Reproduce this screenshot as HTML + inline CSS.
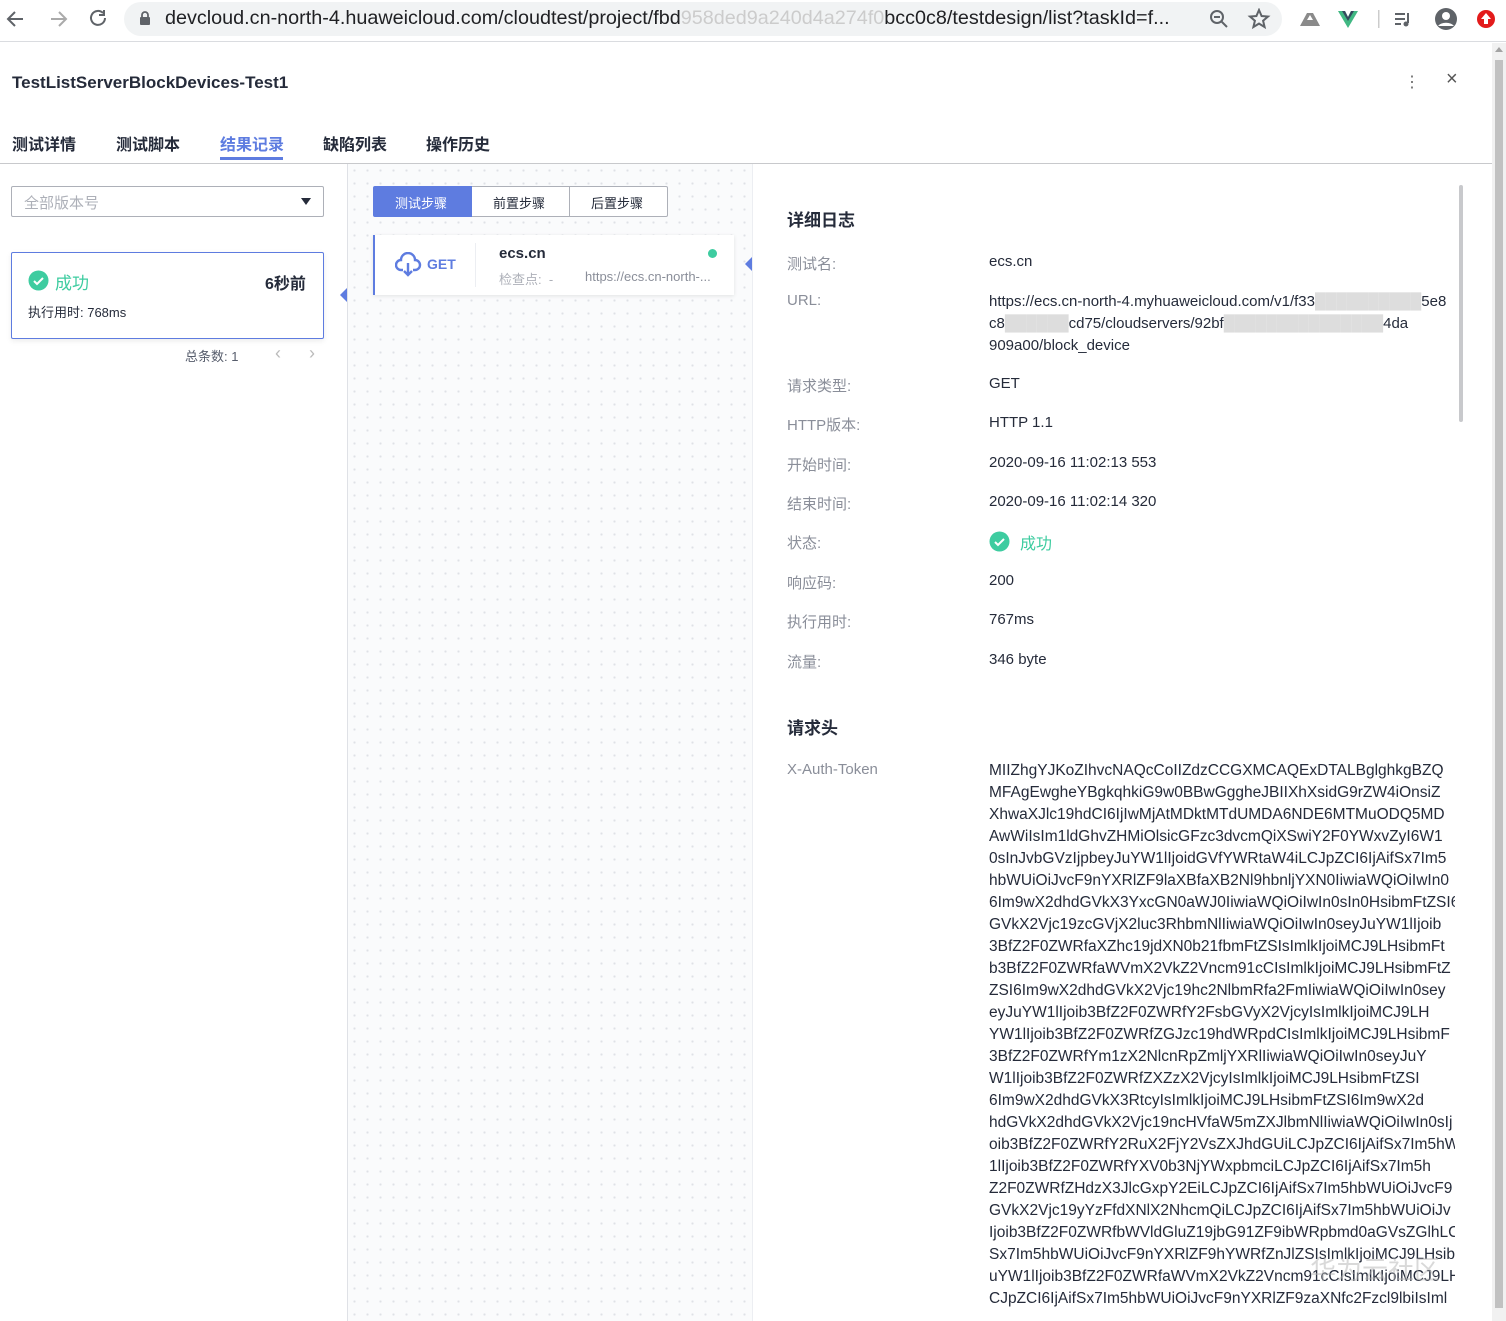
<!DOCTYPE html>
<html><head><meta charset="utf-8">
<style>
*{margin:0;padding:0;box-sizing:border-box}
html,body{width:1506px;height:1321px;overflow:hidden}
body{background:#fff;font-family:"Liberation Sans","Noto Sans CJK SC",sans-serif;position:relative;color:#252b3a}
.a{position:absolute;white-space:nowrap}
.lbl{position:absolute;left:787px;font-size:15px;color:#8a8e99}
.val{position:absolute;left:989px;font-size:15px;color:#252b3a}
.tok{position:absolute;left:989px;top:760px;width:466px;overflow:hidden;font-size:15.5px;line-height:22px;color:#252b3a;white-space:pre}
</style></head><body>
<div class="a" style="left:0;top:0;width:1506px;height:42px;background:#fff;border-bottom:1px solid #dadce0"></div>
<svg class="a" style="left:5px;top:8px" width="120" height="22" viewBox="0 0 120 22" fill="none" stroke="#5f6368" stroke-width="2">
<path d="M18 11H4M10 4l-7 7 7 7"/>
<path d="M46 11h14M54 4l7 7-7 7" stroke="#aaa"/>
<path d="M98 5a7 7 0 1 0 2 5M99 2v5h-5"/>
</svg>
<div class="a" style="left:124px;top:2px;width:1158px;height:34px;background:#f1f3f4;border-radius:17px"></div>
<svg class="a" style="left:139px;top:11px" width="12" height="15" viewBox="0 0 12 15"><rect x="1" y="6" width="10" height="8" rx="1" fill="#5f6368"/><path d="M3 6V4a3 3 0 0 1 6 0v2" stroke="#5f6368" stroke-width="1.8" fill="none"/></svg>
<div class="a" style="left:165px;top:7px;font-size:19.8px;color:#202124">devcloud.cn-north-4.huaweicloud.com/cloudtest/project/fbd<span style="color:#ccc">958ded9a240d4a274f0</span>bcc0c8/testdesign/list?taskId=f...</div>
<svg class="a" style="left:1208px;top:8px" width="64" height="22" viewBox="0 0 64 22" fill="none" stroke="#5f6368" stroke-width="2"><circle cx="9" cy="9" r="6"/><path d="M13 13l6 6M6 9h6"/><path d="M51 2l2.6 6 6.4.5-4.9 4.2 1.5 6.3L51 15.6 45.4 19l1.5-6.3L42 8.5l6.4-.5z"/></svg>
<svg class="a" style="left:1298px;top:7px" width="200" height="24" viewBox="0 0 200 24">
<path d="M2 19l7-13h6l7 13z" fill="#8a8a8a"/><path d="M9 13l3-5 3 5z" fill="#fff"/>
<path d="M40 4h7l3 6 3-6h7l-10 17z" fill="#41b883"/><path d="M44 4h3l3 6 3-6h3l-6 10z" fill="#35495e"/>
<rect x="80" y="3" width="1.5" height="18" fill="#ccc"/>
<path d="M97 7h10M97 12h10M97 17h6M110 6v10" stroke="#5f6368" stroke-width="2"/><circle cx="108" cy="17" r="2.5" fill="#5f6368"/>
<circle cx="148" cy="12" r="11" fill="#5f6368"/><circle cx="148" cy="9" r="4" fill="#fff"/><path d="M140 19a9 6 0 0 1 16 0" fill="#fff"/>
<circle cx="188" cy="12" r="9" fill="#e31b1b"/><path d="M188 6l-5 6h3v5h4v-5h3z" fill="#fff"/>
</svg>
<div class="a" style="left:1492px;top:43px;width:14px;height:1278px;background:#f1f1f1"></div>
<div class="a" style="left:1495px;top:60px;width:8px;height:1248px;background:#c1c1c1"></div>
<div class="a" style="left:1495px;top:47px;width:0;height:0;border-left:4px solid transparent;border-right:4px solid transparent;border-bottom:5px solid #a3a3a3"></div>
<div class="a" style="left:12px;top:73px;font-size:17px;font-weight:bold;color:#252b3a">TestListServerBlockDevices-Test1</div>
<div class="a" style="left:1404px;top:72px;font-size:16px;color:#666">&#8942;</div>
<div class="a" style="left:1446px;top:68px;font-size:20px;color:#555">×</div>
<div class="a" style="left:12px;top:131px;font-size:16px;color:#252b3a;font-weight:bold">测试详情</div>
<div class="a" style="left:116px;top:131px;font-size:16px;color:#252b3a;font-weight:bold">测试脚本</div>
<div class="a" style="left:220px;top:131px;font-size:16px;color:#5e7ce0;font-weight:bold">结果记录</div>
<div class="a" style="left:220px;top:157px;width:63px;height:3px;background:#5e7ce0"></div>
<div class="a" style="left:323px;top:131px;font-size:16px;color:#252b3a;font-weight:bold">缺陷列表</div>
<div class="a" style="left:426px;top:131px;font-size:16px;color:#252b3a;font-weight:bold">操作历史</div>
<div class="a" style="left:0;top:163px;width:1492px;height:1px;background:#c8c9cc"></div>
<div class="a" style="left:347px;top:164px;width:1px;height:1157px;background:#dfe1e6"></div>
<div class="a" style="left:11px;top:186px;width:313px;height:31px;border:1px solid #adb0b8;border-radius:2px"></div>
<div class="a" style="left:24px;top:192px;font-size:15px;color:#adb0b8">全部版本号</div>
<div class="a" style="left:301px;top:198px;border-left:5px solid transparent;border-right:5px solid transparent;border-top:7px solid #252b3a"></div>
<div class="a" style="left:11px;top:252px;width:313px;height:87px;border:1px solid #5e7ce0;border-radius:2px;box-shadow:0 2px 6px rgba(0,0,0,.08)"></div>
<svg class="a" style="left:28px;top:270px" width="21" height="21" viewBox="0 0 21 21"><circle cx="10.5" cy="10.5" r="10" fill="#3ecca0"/><path d="M6 11l3 3 6-6" stroke="#fff" stroke-width="2" fill="none"/></svg>
<div class="a" style="left:55px;top:269px;font-size:17px;color:#3ecca0">成功</div>
<div class="a" style="left:265px;top:270px;font-size:16px;font-weight:bold;color:#252b3a">6秒前</div>
<div class="a" style="left:28px;top:302px;font-size:13px;color:#252b3a">执行用时: 768ms</div>
<div class="a" style="left:185px;top:346px;font-size:13px;color:#575d6c">总条数: 1</div>
<div class="a" style="left:275px;top:343px;font-size:18px;color:#bbb">‹</div>
<div class="a" style="left:309px;top:343px;font-size:18px;color:#bbb">›</div>
<div class="a" style="left:340px;top:288px;border-top:7px solid transparent;border-bottom:7px solid transparent;border-right:7px solid #5e7ce0"></div>
<div class="a" style="left:348px;top:164px;width:405px;height:1157px;background-color:#fafbfc;background-image:radial-gradient(#dfe1e6 1px,transparent 1.2px);background-size:13px 13px"></div>
<div class="a" style="left:752px;top:164px;width:1px;height:1157px;background:#eceef2"></div>
<div class="a" style="left:373px;top:186px;width:99px;height:31px;background:#5e7ce0;border-radius:2px 0 0 2px"></div>
<div class="a" style="left:395px;top:193px;font-size:13px;color:#fff">测试步骤</div>
<div class="a" style="left:472px;top:186px;width:196px;height:31px;border:1px solid #adb0b8;border-left:none;background:#fff;border-radius:0 2px 2px 0"></div>
<div class="a" style="left:569px;top:187px;width:1px;height:29px;background:#adb0b8"></div>
<div class="a" style="left:493px;top:193px;font-size:13px;color:#252b3a">前置步骤</div>
<div class="a" style="left:591px;top:193px;font-size:13px;color:#252b3a">后置步骤</div>
<div class="a" style="left:373px;top:235px;width:361px;height:60px;background:#fff;border-left:2px solid #5e7ce0;box-shadow:0 1px 4px rgba(0,0,0,.1)"></div>
<svg class="a" style="left:395px;top:252px" width="27" height="25" viewBox="0 0 27 25" fill="none" stroke="#5e7ce0" stroke-width="2.4"><path d="M8 18H6a5 5 0 0 1 0-10 7 7 0 0 1 14 0 5 5 0 0 1 0 10h-2"/><path d="M13 11v12M9 19l4 4 4-4"/></svg>
<div class="a" style="left:427px;top:256px;font-size:14px;font-weight:bold;color:#5e7ce0">GET</div>
<div class="a" style="left:475px;top:243px;width:1px;height:44px;background:#eceef2"></div>
<div class="a" style="left:499px;top:245px;font-size:15px;font-weight:bold;color:#252b3a">ecs.cn</div>
<div class="a" style="left:708px;top:249px;width:9px;height:9px;border-radius:50%;background:#3ecca0"></div>
<div class="a" style="left:499px;top:269px;font-size:13px;color:#adb0b8">检查点:&nbsp; -</div>
<div class="a" style="left:585px;top:269px;font-size:13px;color:#8a8e99">https://ecs.cn-north-...</div>
<div class="a" style="left:745px;top:257px;border-top:7px solid transparent;border-bottom:7px solid transparent;border-right:7px solid #5e7ce0"></div>
<div class="a" style="left:787px;top:206px;font-size:17px;font-weight:bold;color:#252b3a">详细日志</div>
<div class="lbl" style="top:253px">测试名:</div><div class="val" style="top:253px">ecs.cn</div>
<div class="lbl" style="top:292px">URL:</div>
<div class="val" style="top:291px;line-height:22px;white-space:pre">https://ecs.cn-north-4.myhuaweicloud.com/v1/f33<span style="color:#ddd">██████████</span>5e8
c8<span style="color:#ddd">██████</span>cd75/cloudservers/92bf<span style="color:#ddd">███████████████</span>4da
909a00/block_device</div>
<div class="lbl" style="top:375px">请求类型:</div><div class="val" style="top:375px">GET</div>
<div class="lbl" style="top:414px">HTTP版本:</div><div class="val" style="top:414px">HTTP 1.1</div>
<div class="lbl" style="top:454px">开始时间:</div><div class="val" style="top:454px">2020-09-16 11:02:13 553</div>
<div class="lbl" style="top:493px">结束时间:</div><div class="val" style="top:493px">2020-09-16 11:02:14 320</div>
<div class="lbl" style="top:532px">状态:</div>
<svg class="a" style="left:989px;top:531px" width="21" height="21" viewBox="0 0 21 21"><circle cx="10.5" cy="10.5" r="10" fill="#3ecca0"/><path d="M6 11l3 3 6-6" stroke="#fff" stroke-width="2" fill="none"/></svg>
<div class="a" style="left:1020px;top:530px;font-size:16px;color:#3ecca0">成功</div>
<div class="lbl" style="top:572px">响应码:</div><div class="val" style="top:572px">200</div>
<div class="lbl" style="top:611px">执行用时:</div><div class="val" style="top:611px">767ms</div>
<div class="lbl" style="top:651px">流量:</div><div class="val" style="top:651px">346 byte</div>
<div class="a" style="left:787px;top:714px;font-size:17px;font-weight:bold;color:#252b3a">请求头</div>
<div class="lbl" style="top:761px">X-Auth-Token</div>
<div class="tok">MIIZhgYJKoZIhvcNAQcCoIIZdzCCGXMCAQExDTALBglghkgBZQ
MFAgEwgheYBgkqhkiG9w0BBwGggheJBIIXhXsidG9rZW4iOnsiZ
XhwaXJlc19hdCI6IjIwMjAtMDktMTdUMDA6NDE6MTMuODQ5MD
AwWiIsIm1ldGhvZHMiOlsicGFzc3dvcmQiXSwiY2F0YWxvZyI6W1
0sInJvbGVzIjpbeyJuYW1lIjoidGVfYWRtaW4iLCJpZCI6IjAifSx7Im5
hbWUiOiJvcF9nYXRlZF9laXBfaXB2Nl9hbnljYXN0IiwiaWQiOiIwIn0
6Im9wX2dhdGVkX3YxcGN0aWJ0IiwiaWQiOiIwIn0sIn0HsibmFtZSI6
GVkX2Vjc19zcGVjX2luc3RhbmNlIiwiaWQiOiIwIn0seyJuYW1lIjoib
3BfZ2F0ZWRfaXZhc19jdXN0b21fbmFtZSIsImlkIjoiMCJ9LHsibmFt
b3BfZ2F0ZWRfaWVmX2VkZ2Vncm91cCIsImlkIjoiMCJ9LHsibmFtZ
ZSI6Im9wX2dhdGVkX2Vjc19hc2NlbmRfa2FmIiwiaWQiOiIwIn0sey
eyJuYW1lIjoib3BfZ2F0ZWRfY2FsbGVyX2VjcyIsImlkIjoiMCJ9LH
YW1lIjoib3BfZ2F0ZWRfZGJzc19hdWRpdCIsImlkIjoiMCJ9LHsibmF
3BfZ2F0ZWRfYm1zX2NlcnRpZmljYXRlIiwiaWQiOiIwIn0seyJuY
W1lIjoib3BfZ2F0ZWRfZXZzX2VjcyIsImlkIjoiMCJ9LHsibmFtZSI
6Im9wX2dhdGVkX3RtcyIsImlkIjoiMCJ9LHsibmFtZSI6Im9wX2d
hdGVkX2dhdGVkX2Vjc19ncHVfaW5mZXJlbmNlIiwiaWQiOiIwIn0sIj
oib3BfZ2F0ZWRfY2RuX2FjY2VsZXJhdGUiLCJpZCI6IjAifSx7Im5hW
1lIjoib3BfZ2F0ZWRfYXV0b3NjYWxpbmciLCJpZCI6IjAifSx7Im5h
Z2F0ZWRfZHdzX3JlcGxpY2EiLCJpZCI6IjAifSx7Im5hbWUiOiJvcF9
GVkX2Vjc19yYzFfdXNlX2NhcmQiLCJpZCI6IjAifSx7Im5hbWUiOiJv
Ijoib3BfZ2F0ZWRfbWVldGluZ19jbG91ZF9ibWRpbmd0aGVsZGlhLC
Sx7Im5hbWUiOiJvcF9nYXRlZF9hYWRfZnJlZSIsImlkIjoiMCJ9LHsibm
uYW1lIjoib3BfZ2F0ZWRfaWVmX2VkZ2Vncm91cCIsImlkIjoiMCJ9LHs
CJpZCI6IjAifSx7Im5hbWUiOiJvcF9nYXRlZF9zaXNfc2Fzcl9lbiIsIml</div>
<div class="a" style="left:1459px;top:185px;width:4px;height:237px;background:#c8c9cc;border-radius:2px"></div>
<div class="a" style="left:1310px;top:1250px;font-size:26px;color:rgba(180,180,180,.5)">华为云社区</div>
</body></html>
